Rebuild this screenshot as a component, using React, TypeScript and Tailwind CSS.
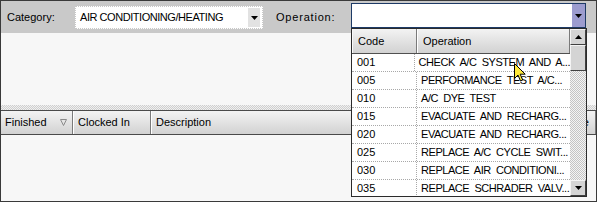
import React from "react";

const rows: [string, string][] = [
  ["001", "CHECK  A/C  SYSTEM  AND  A..."],
  ["005", "PERFORMANCE  TEST  A/C..."],
  ["010", "A/C  DYE  TEST"],
  ["015", "EVACUATE  AND  RECHARG..."],
  ["020", "EVACUATE  AND  RECHARG..."],
  ["025", "REPLACE  A/C  CYCLE  SWIT..."],
  ["030", "REPLACE  AIR  CONDITIONI..."],
  ["035", "REPLACE  SCHRADER  VALV..."],
];

function DownArrow() {
  return (
    <svg width="7" height="4" viewBox="0 0 7 4">
      <path d="M0 0h7L3.5 4z" fill="#000" />
    </svg>
  );
}

function UpArrow() {
  return (
    <svg width="7" height="4" viewBox="0 0 7 4">
      <path d="M0 4h7L3.5 0z" fill="#000" />
    </svg>
  );
}

function HeaderCell({ children, className = "" }: { children?: React.ReactNode; className?: string }) {
  return (
    <div
      className={
        "flex h-full items-center border-l border-l-white border-r border-r-[#7a7a7a] bg-gradient-to-b from-[#f3f3f3] to-[#d2d2d2] pl-[4px] " +
        className
      }
    >
      {children}
    </div>
  );
}

function ScrollButton({ children }: { children: React.ReactNode }) {
  return (
    <div className="flex h-[16px] w-[16px] items-center justify-center border border-t-[#f4f4f4] border-l-[#f4f4f4] border-r-[#404040] border-b-[#404040] bg-[#d4d4d4]">
      {children}
    </div>
  );
}

export default function App() {
  return (
    <div className="relative h-[202px] w-[597px] overflow-hidden border border-[#3a3a3a] bg-[#f7f7f7] font-['Liberation_Sans',Arial,sans-serif] text-[11px] leading-[13px] text-black">
      {/* toolbar */}
      <div className="flex h-[32px] items-start bg-[#c9c9c9]">
        <span className="ml-[6px] mt-[10px] w-[68px]">Category:</span>
        <div className="mt-[5px] flex h-[23px] w-[188px] items-center justify-between border border-dotted border-[#c8c8c8] bg-white">
          <span className="pl-[4px] tracking-[-0.45px]">AIR CONDITIONING/HEATING</span>
          <div className="mr-[2px] flex h-[19px] w-[12px] items-center justify-center bg-[#e2e2e2]">
            <DownArrow />
          </div>
        </div>
        <span className="ml-[13px] mt-[10px] w-[75px] tracking-[0.8px]">Operation:</span>
        <div className="mt-[2px] flex h-[25px] w-[235px] justify-end border border-[#1d3a66] bg-white">
          <div className="flex h-full w-[13px] items-center justify-center bg-[#9c9ccf]">
            <DownArrow />
          </div>
        </div>
      </div>

      {/* empty area above grid */}
      <div className="h-[72px]" />
      <div className="h-[5px] bg-[repeating-conic-gradient(#cfcfcf_0%_25%,#f0f0f0_0%_50%)] bg-[length:2px_2px]" />

      {/* grid header */}
      <div className="flex h-[25px] border-y border-[#4a4a4a]">
        <HeaderCell className="w-[72px] justify-between !border-l-0 pl-[3px] pr-[5px]">
          <span>Finished</span>
          <svg width="7" height="7" viewBox="0 0 7 7">
            <path d="M0.5 0.5h6L3.5 6.5z" fill="none" stroke="#8a8a8a" />
          </svg>
        </HeaderCell>
        <HeaderCell className="w-[78px]">Clocked In</HeaderCell>
        <HeaderCell className="w-[409px]">Description</HeaderCell>
        <HeaderCell className="flex-1">Type</HeaderCell>
      </div>

      {/* operation drop-down list */}
      <div className="absolute left-[350px] top-[27px] flex h-[169px] w-[236px] border border-[#2b2b2b] bg-white">
        <div className="flex w-[218px] flex-col overflow-hidden">
          <div className="flex h-[25px] shrink-0 border-b border-[#505050]">
            <HeaderCell className="w-[65px] !border-l-[#fafafa] pl-[5px]">Code</HeaderCell>
            <HeaderCell className="flex-1 pl-[5px]">Operation</HeaderCell>
          </div>
          {rows.map(([code, op]) => (
            <div key={code} className="flex h-[18px] shrink-0 items-center border-b border-dotted border-[#a8a8a8]">
              <span className="flex h-full w-[65px] items-center border-r border-dotted border-[#a8a8a8] pl-[5px]">
                {code}
              </span>
              <span className="whitespace-pre pl-[4px] tracking-[-0.45px]">{op}</span>
            </div>
          ))}
        </div>
        <div className="flex w-[16px] flex-col">
          <ScrollButton>
            <UpArrow />
          </ScrollButton>
          <div className="h-[26px] border border-t-[#f4f4f4] border-l-[#f4f4f4] border-r-[#404040] border-b-[#404040] bg-[#d4d4d4]" />
          <div className="flex-1 bg-[repeating-conic-gradient(#c4c4c4_0%_25%,#f4f4f4_0%_50%)] bg-[length:2px_2px]" />
          <ScrollButton>
            <DownArrow />
          </ScrollButton>
        </div>
      </div>

      {/* mouse pointer */}
      <svg className="absolute left-[513px] top-[62px]" width="12" height="19" viewBox="0 0 12 19">
        <path d="M0.5 0.5v15l3.5-3.5 2.5 6 2.2-1-2.5-5.8h5z" fill="#ffe93a" stroke="#000" strokeWidth="1" strokeLinejoin="round" />
      </svg>
    </div>
  );
}
